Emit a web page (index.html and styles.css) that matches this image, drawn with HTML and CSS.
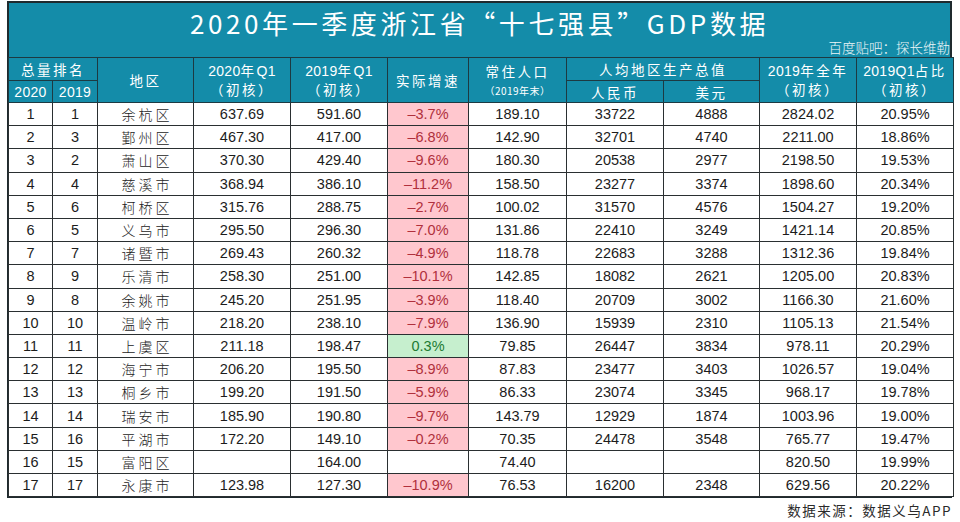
FILE: index.html
```html
<!DOCTYPE html>
<html lang="zh-CN">
<head>
<meta charset="utf-8">
<title>2020年一季度浙江省“十七强县”GDP数据</title>
<link rel="stylesheet" href="styles.css">
</head>
<body>
<div class="sheet">
  <div class="banner">
    <h1 class="title">2020年一季度浙江省“十七强县”GDP数据</h1>
    <div class="credit">百度贴吧：探长维勒</div>
  </div>
  <table class="grid">
    <colgroup>
      <col class="c44"><col class="c45"><col class="c96"><col class="c97"><col class="c97"><col class="c81"><col class="c98"><col class="c97"><col class="c96"><col class="c97"><col class="c97">
    </colgroup>
    <thead>
      <tr class="h1">
        <th colspan="2" class="cjk">总量排名</th>
        <th rowspan="2" class="cjk">地区</th>
        <th rowspan="2"><span class="num">2020</span><span class="cjk">年</span><span class="num">Q1</span><br><span class="cjk">（初核）</span></th>
        <th rowspan="2"><span class="num">2019</span><span class="cjk">年</span><span class="num">Q1</span><br><span class="cjk">（初核）</span></th>
        <th rowspan="2" class="cjk">实际增速</th>
        <th rowspan="2"><span class="cjk">常住人口</span><br><span class="note">（2019年末）</span></th>
        <th colspan="2" class="cjk">人均地区生产总值</th>
        <th rowspan="2"><span class="num">2019</span><span class="cjk">年全年</span><br><span class="cjk">（初核）</span></th>
        <th rowspan="2"><span class="num">2019Q1</span><span class="cjk">占比</span><br><span class="cjk">（初核）</span></th>
      </tr>
      <tr class="h2">
        <th class="num">2020</th>
        <th class="num">2019</th>
        <th class="cjk">人民币</th>
        <th class="cjk">美元</th>
      </tr>
    </thead>
    <tbody>
      <tr><td>1</td><td>1</td><td class="name">余杭区</td><td>637.69</td><td>591.60</td><td class="neg">–3.7%</td><td>189.10</td><td>33722</td><td>4888</td><td>2824.02</td><td>20.95%</td></tr>
      <tr><td>2</td><td>3</td><td class="name">鄞州区</td><td>467.30</td><td>417.00</td><td class="neg">–6.8%</td><td>142.90</td><td>32701</td><td>4740</td><td>2211.00</td><td>18.86%</td></tr>
      <tr><td>3</td><td>2</td><td class="name">萧山区</td><td>370.30</td><td>429.40</td><td class="neg">–9.6%</td><td>180.30</td><td>20538</td><td>2977</td><td>2198.50</td><td>19.53%</td></tr>
      <tr><td>4</td><td>4</td><td class="name">慈溪市</td><td>368.94</td><td>386.10</td><td class="neg">–11.2%</td><td>158.50</td><td>23277</td><td>3374</td><td>1898.60</td><td>20.34%</td></tr>
      <tr><td>5</td><td>6</td><td class="name">柯桥区</td><td>315.76</td><td>288.75</td><td class="neg">–2.7%</td><td>100.02</td><td>31570</td><td>4576</td><td>1504.27</td><td>19.20%</td></tr>
      <tr><td>6</td><td>5</td><td class="name">义乌市</td><td>295.50</td><td>296.30</td><td class="neg">–7.0%</td><td>131.86</td><td>22410</td><td>3249</td><td>1421.14</td><td>20.85%</td></tr>
      <tr><td>7</td><td>7</td><td class="name">诸暨市</td><td>269.43</td><td>260.32</td><td class="neg">–4.9%</td><td>118.78</td><td>22683</td><td>3288</td><td>1312.36</td><td>19.84%</td></tr>
      <tr><td>8</td><td>9</td><td class="name">乐清市</td><td>258.30</td><td>251.00</td><td class="neg">–10.1%</td><td>142.85</td><td>18082</td><td>2621</td><td>1205.00</td><td>20.83%</td></tr>
      <tr><td>9</td><td>8</td><td class="name">余姚市</td><td>245.20</td><td>251.95</td><td class="neg">–3.9%</td><td>118.40</td><td>20709</td><td>3002</td><td>1166.30</td><td>21.60%</td></tr>
      <tr><td>10</td><td>10</td><td class="name">温岭市</td><td>218.20</td><td>238.10</td><td class="neg">–7.9%</td><td>136.90</td><td>15939</td><td>2310</td><td>1105.13</td><td>21.54%</td></tr>
      <tr><td>11</td><td>11</td><td class="name">上虞区</td><td>211.18</td><td>198.47</td><td class="pos">0.3%</td><td>79.85</td><td>26447</td><td>3834</td><td>978.11</td><td>20.29%</td></tr>
      <tr><td>12</td><td>12</td><td class="name">海宁市</td><td>206.20</td><td>195.50</td><td class="neg">–8.9%</td><td>87.83</td><td>23477</td><td>3403</td><td>1026.57</td><td>19.04%</td></tr>
      <tr><td>13</td><td>13</td><td class="name">桐乡市</td><td>199.20</td><td>191.50</td><td class="neg">–5.9%</td><td>86.33</td><td>23074</td><td>3345</td><td>968.17</td><td>19.78%</td></tr>
      <tr><td>14</td><td>14</td><td class="name">瑞安市</td><td>185.90</td><td>190.80</td><td class="neg">–9.7%</td><td>143.79</td><td>12929</td><td>1874</td><td>1003.96</td><td>19.00%</td></tr>
      <tr><td>15</td><td>16</td><td class="name">平湖市</td><td>172.20</td><td>149.10</td><td class="neg">–0.2%</td><td>70.35</td><td>24478</td><td>3548</td><td>765.77</td><td>19.47%</td></tr>
      <tr><td>16</td><td>15</td><td class="name">富阳区</td><td></td><td>164.00</td><td></td><td>74.40</td><td></td><td></td><td>820.50</td><td>19.99%</td></tr>
      <tr><td>17</td><td>17</td><td class="name">永康市</td><td>123.98</td><td>127.30</td><td class="neg">–10.9%</td><td>76.53</td><td>16200</td><td>2348</td><td>629.56</td><td>20.22%</td></tr>
    </tbody>
  </table>
</div>
<p class="source">数据来源：数据义乌APP</p>
</body>
</html>
```

FILE: styles.css
```css
html, body {
  margin: 0;
  padding: 0;
  background: #ffffff;
}

body {
  padding: 1px 0 0 7px;
  font-family: "Liberation Sans", "Noto Sans CJK SC", sans-serif;
  color: #111;
}

.sheet {
  width: 945px;
  box-sizing: border-box;
  border: 2px solid #1f2a2e;
  background: #148ca9;
}

.banner {
  height: 54px;
  display: flex;
  flex-direction: column;
  align-items: center;
  box-sizing: border-box;
  padding-top: 3px;
}

.title {
  margin: 0;
  font-family: "Noto Sans CJK SC", sans-serif;
  font-weight: 400;
  font-size: 26px;
  line-height: 34px;
  letter-spacing: 3.6px;
  color: #ffffff;
  padding-left: 0;
}

.credit {
  align-self: flex-end;
  margin-top: -1px;
  padding-right: 0;
  font-family: "Noto Sans CJK SC", sans-serif;
  font-weight: 300;
  font-size: 13.5px;
  line-height: 16px;
  color: #eef6f8;
}

.grid {
  width: 941px;
  border-collapse: collapse;
  table-layout: fixed;
  margin-left: -1px;
  margin-bottom: -1px;
}

.c44 { width: 44px; }
.c45 { width: 45px; }
.c96 { width: 96px; }
.c97 { width: 97px; }
.c98 { width: 98px; }
.c81 { width: 81px; }

.grid th,
.grid td {
  border: 1px solid #2a2f31;
  padding: 0;
  text-align: center;
  vertical-align: middle;
}

.grid th {
  background: #148ca9;
  color: #ffffff;
  font-weight: 400;
  font-size: 14px;
  line-height: 18px;
  border-color: #1d3a42;
}

.grid tr.h1 th { height: 22px; }
.grid tr.h2 th { height: 21px; }

.grid th .cjk,
.grid th.cjk {
  font-family: "Noto Sans CJK SC", sans-serif;
  font-weight: 400;
  font-size: 13.5px;
  letter-spacing: 2.5px;
}

.grid th .num,
.grid th.num {
  font-family: "Liberation Sans", sans-serif;
  letter-spacing: 0.3px;
}

.grid th .note {
  font-family: "Noto Sans CJK SC", sans-serif;
  font-size: 10px;
  line-height: 14px;
  letter-spacing: 0.5px;
}

.grid td {
  background: #ffffff;
  height: 22.2px;
  font-size: 14.5px;
  line-height: 18px;
  color: #1c1c1c;
}

.grid td.name {
  font-family: "Noto Sans CJK SC", sans-serif;
  font-weight: 300;
  font-size: 14px;
  letter-spacing: 3px;
  padding-left: 3px;
}

.grid td.neg {
  background: #ffc7ce;
  color: #b0303c;
}

.grid td.pos {
  background: #c6efce;
  color: #217a33;
}

.source {
  width: 945px;
  margin: 4px 0 0 0;
  text-align: right;
  font-family: "Noto Sans CJK SC", sans-serif;
  font-size: 13.5px;
  line-height: 16px;
  letter-spacing: 1.5px;
  color: #2a2a2a;
}
```
